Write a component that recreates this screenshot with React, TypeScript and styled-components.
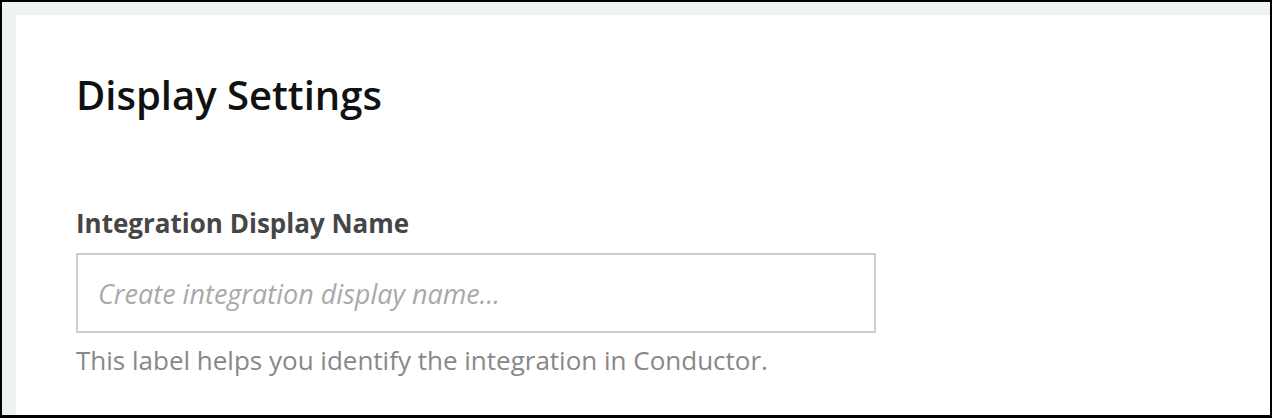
import styled, { createGlobalStyle } from 'styled-components';

const GlobalStyle = createGlobalStyle`
  html, body {
    margin: 0;
    padding: 0;
    background: #000;
  }
  * {
    box-sizing: border-box;
  }
`;

const Frame = styled.div`
  width: 1272px;
  height: 418px;
  border-style: solid;
  border-color: #000;
  border-width: 2px 2px 3px 2px;
  background: #eff2f3;
  padding: 13px 0 0 14px;
  display: flex;
  overflow: hidden;
`;

const Card = styled.section`
  flex: 1;
  background: #fff;
  border-top-left-radius: 4px;
  padding: 56px 60px 0 60px;
  font-family: 'Open Sans', 'Noto Sans', sans-serif;
`;

const Title = styled.h2`
  margin: 0;
  font-size: 40px;
  line-height: 48px;
  font-weight: 600;
  color: #111;
`;

const Field = styled.div`
  margin-top: 88px;
  width: 800px;
  display: flex;
  flex-direction: column;
`;

const Label = styled.label`
  font-size: 26px;
  line-height: 32px;
  font-weight: 700;
  color: #464646;
`;

const TextInput = styled.input`
  margin-top: 14px;
  height: 80px;
  width: 100%;
  border: 2px solid #cdcdcd;
  border-radius: 0;
  padding: 0 20px;
  font-family: inherit;
  font-size: 27px;
  color: #333;
  outline: none;

  &::placeholder {
    font-style: italic;
    color: #a9a9a9;
  }
`;

const Hint = styled.p`
  margin: 11px 0 0;
  font-size: 26px;
  line-height: 32px;
  color: #888;
`;

export default function App() {
  return (
    <>
      <GlobalStyle />
      <Frame>
        <Card>
          <Title>Display Settings</Title>
          <Field>
            <Label htmlFor="display-name">Integration Display Name</Label>
            <TextInput id="display-name" placeholder="Create integration display name..." />
            <Hint>This label helps you identify the integration in Conductor.</Hint>
          </Field>
        </Card>
      </Frame>
    </>
  );
}
